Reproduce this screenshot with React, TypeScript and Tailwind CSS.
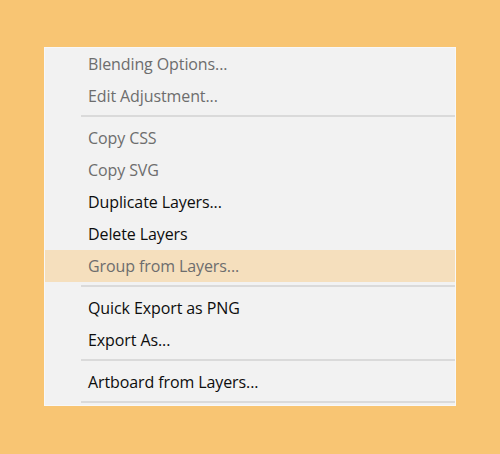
type Item = { label: string; disabled?: boolean; active?: boolean } | 'sep'

const items: Item[] = [
  { label: 'Blending Options...', disabled: true },
  { label: 'Edit Adjustment...', disabled: true },
  'sep',
  { label: 'Copy CSS', disabled: true },
  { label: 'Copy SVG', disabled: true },
  { label: 'Duplicate Layers...' },
  { label: 'Delete Layers' },
  { label: 'Group from Layers...', disabled: true, active: true },
  'sep',
  { label: 'Quick Export as PNG' },
  { label: 'Export As...' },
  'sep',
  { label: 'Artboard from Layers...' },
  'sep',
]

export default function App() {
  return (
    <div className="w-[500px] h-[454px] bg-[#f8c573] pt-[47px] pl-[44px]">
      <div
        className="w-[412px] bg-[#f2f2f2] border border-[#f8f8f8] pb-[1px]"
        style={{ fontFamily: '"Open Sans", "Noto Sans", sans-serif' }}
      >
        {items.map((it, i) => {
          if (it === 'sep') {
            return (
              <div key={i} className="pt-[3px] pb-[5px] pl-[36px] last:pb-[1px]">
                <div className="h-[2px] bg-[#dadada]" />
              </div>
            )
          }
          return (
            <div
              key={i}
              className={`h-[32px] flex items-center pl-[43px] text-[16px] tracking-[-0.1px] ${
                it.active ? 'bg-[#f5dfbd]' : ''
              } ${it.disabled ? 'text-[#6d6d6d]' : 'text-[#0d0d0d] font-medium'}`}
            >
              {it.label}
            </div>
          )
        })}
      </div>
    </div>
  )
}
